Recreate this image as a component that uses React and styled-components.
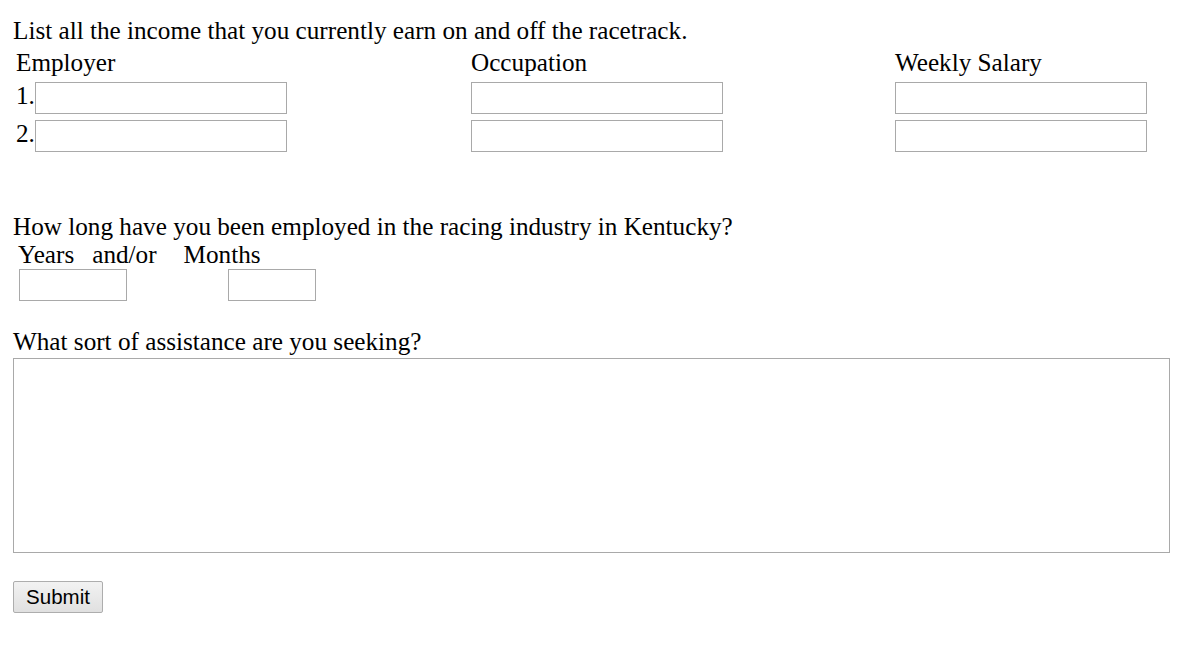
import React from "react";
import styled, { createGlobalStyle } from "styled-components";

const GlobalStyle = createGlobalStyle`
  html, body { margin: 0; padding: 0; background: #fff; }
  body {
    font-family: "Liberation Serif", "Times New Roman", serif;
    font-size: 25.2px;
    color: #000;
  }
`;

const Page = styled.form`
  display: flex;
  flex-direction: column;
  align-items: flex-start;
  padding: 17px 0 40px 13px;
`;

const Question = styled.div`
  line-height: 28px;
  margin-top: ${(p) => p.$mt || 0}px;
  white-space: nowrap;
`;

const IncomeGrid = styled.div`
  display: grid;
  grid-template-columns: 455px 424px 253px;
  grid-template-rows: 28px;
  grid-auto-rows: 32px;
  row-gap: 6px;
  margin: 3px 0 0 3px;
  & > :nth-child(-n + 3) {
    margin-top: 1px;
  }
`;

const HeadCell = styled.div`
  line-height: 28px;
  height: 28px;
`;

const Cell = styled.div`
  display: flex;
  align-items: flex-start;
`;

const RowNum = styled.span`
  line-height: 28px;
  width: 19px;
`;

const TextInput = styled.input`
  box-sizing: border-box;
  width: ${(p) => p.$w || 252}px;
  height: 32px;
  border: 1px solid #a9a9a9;
  border-radius: 0;
  margin: 0;
  padding: 1px 4px;
  font-family: "Liberation Sans", Arial, sans-serif;
  font-size: 16px;
  background: #fff;
  outline: none;
`;

const DurationLabels = styled.div`
  display: flex;
  line-height: 28px;
  padding-left: 5px;
`;

const DurLabel = styled.span`
  margin-left: ${(p) => p.$ml || 0}px;
`;

const DurationInputs = styled.div`
  display: flex;
  margin: 0 0 0 6px;
  gap: 101px;
`;

const TextArea = styled.textarea`
  box-sizing: border-box;
  width: 1157px;
  height: 195px;
  margin-top: 2px;
  border: 1px solid #a9a9a9;
  border-radius: 0;
  padding: 2px;
  resize: none;
  font-family: "Liberation Mono", monospace;
  font-size: 13px;
  outline: none;
`;

const SubmitButton = styled.button`
  box-sizing: border-box;
  margin-top: 28px;
  width: 90px;
  height: 32px;
  padding: 0;
  font-family: "Liberation Sans", Arial, sans-serif;
  font-size: 20.5px;
  color: #000;
  background: linear-gradient(#f2f2f2, #e0e0e0);
  border: 1px solid #adadad;
  border-radius: 2px;
  cursor: pointer;
`;

const rows = ["1.", "2."];

export default function App() {
  return (
    <>
      <GlobalStyle />
      <Page onSubmit={(e) => e.preventDefault()}>
        <Question>List all the income that you currently earn on and off the racetrack.</Question>
        <IncomeGrid>
          <HeadCell>Employer</HeadCell>
          <HeadCell>Occupation</HeadCell>
          <HeadCell>Weekly Salary</HeadCell>
          {rows.map((r) => (
            <React.Fragment key={r}>
              <Cell>
                <RowNum>{r}</RowNum>
                <TextInput type="text" />
              </Cell>
              <Cell>
                <TextInput type="text" />
              </Cell>
              <Cell>
                <TextInput type="text" />
              </Cell>
            </React.Fragment>
          ))}
        </IncomeGrid>

        <Question $mt={61}>How long have you been employed in the racing industry in Kentucky?</Question>
        <DurationLabels>
          <DurLabel>Years</DurLabel>
          <DurLabel $ml={18}>and/or</DurLabel>
          <DurLabel $ml={27}>Months</DurLabel>
        </DurationLabels>
        <DurationInputs>
          <TextInput type="text" $w={108} />
          <TextInput type="text" $w={88} />
        </DurationInputs>

        <Question $mt={27}>What sort of assistance are you seeking?</Question>
        <TextArea />

        <SubmitButton type="submit">Submit</SubmitButton>
      </Page>
    </>
  );
}
